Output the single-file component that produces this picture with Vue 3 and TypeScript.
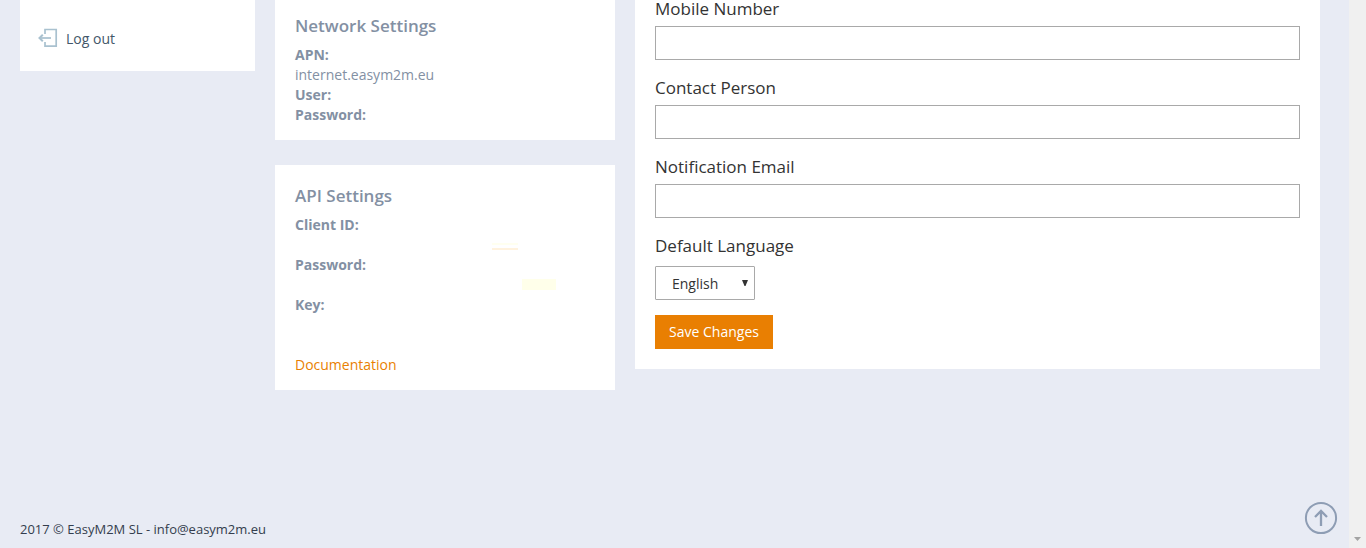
<script setup lang="ts">
import { ref } from 'vue'

interface Field {
  id: string
  label: string
}

const fields: Field[] = [
  { id: 'mobile', label: 'Mobile Number' },
  { id: 'contact', label: 'Contact Person' },
  { id: 'email', label: 'Notification Email' },
]
const values = ref<Record<string, string>>({ mobile: '', contact: '', email: '' })
</script>

<template>
  <div class="window">
    <div class="page">
      <div class="columns">
        <nav class="card sidebar">
          <a class="logout">
            <svg class="logout-icon" width="20" height="20" viewBox="0 0 20 20" fill="none">
              <path d="M7 6V1.5H18.2V18.2H7V14" stroke="#a9c1cf" stroke-width="1.7" />
              <path d="M13 10H2" stroke="#a9c1cf" stroke-width="1.7" />
              <path d="M4.8 6.8L1.5 10L4.8 13.2" stroke="#a9c1cf" stroke-width="2" />
            </svg>
            <span>Log out</span>
          </a>
        </nav>

        <div class="settings">
          <section class="card network">
            <h2>Network Settings</h2>
            <p><b>APN:</b></p>
            <p>internet.easym2m.eu</p>
            <p><b>User:</b></p>
            <p><b>Password:</b></p>
          </section>
          <section class="card api">
            <h2>API Settings</h2>
            <p class="double"><b>Client ID:</b></p>
            <p class="double"><b>Password:</b></p>
            <p class="triple"><b>Key:</b></p>
            <p><a class="link">Documentation</a></p>
            <i class="mark mark-line"></i>
            <i class="mark mark-block"></i>
          </section>
        </div>

        <form class="card profile" @submit.prevent>
          <div v-for="field in fields" :key="field.id" class="field">
            <label :for="field.id">{{ field.label }}</label>
            <input :id="field.id" v-model="values[field.id]" type="text" />
          </div>
          <label class="language-label">Default Language</label>
          <div class="select">
            <span>English</span>
            <svg width="6" height="6" viewBox="0 0 6 6"><path d="M0 0H6L3.5 6H2.5Z" fill="#333" /></svg>
          </div>
          <button type="submit">Save Changes</button>
        </form>
      </div>

      <footer>
        <span>2017 © EasyM2M SL - info@easym2m.eu</span>
        <svg class="to-top" width="34" height="34" viewBox="0 0 34 34" fill="none" stroke="#8e9db4">
          <circle cx="17" cy="17" r="15.1" stroke-width="2" />
          <path d="M17 25V10.5M11 16L17 10L23 16" stroke-width="2.3" />
        </svg>
      </footer>
    </div>
    <div class="scrollbar">
      <svg width="7" height="4" viewBox="0 0 7 4"><path d="M0 0H7L3.5 4Z" fill="#a3a3a3" /></svg>
    </div>
  </div>
</template>

<style>
body {
  margin: 0;
  overflow: hidden;
}
</style>

<style scoped>
.window {
  display: flex;
  height: 548px;
  box-sizing: border-box;
  overflow: hidden;
  font: 14px/20px "Open Sans", sans-serif;
  color: #8390a3;
}
.page {
  flex: 1;
  display: flex;
  flex-direction: column;
  justify-content: space-between;
  background: #e8ebf4;
}
.columns {
  display: flex;
  align-items: flex-start;
  gap: 20px;
  padding-left: 20px;
}
.card {
  box-sizing: border-box;
  background: #fff;
}
.sidebar {
  width: 235px;
  height: 71px;
  padding: 28px 18px 0;
}
.logout {
  display: flex;
  align-items: flex-start;
  gap: 8px;
  color: #43576a;
}
.logout span {
  padding-top: 1px;
}
.settings {
  display: flex;
  flex-direction: column;
  gap: 25px;
  width: 340px;
}
.network {
  height: 140px;
  padding: 16px 20px 0;
}
.api {
  position: relative;
  height: 225px;
  padding: 21px 20px 0;
}
h2 {
  margin: 0 0 9px;
  font-size: 17px;
  line-height: 20px;
  font-weight: 600;
}
p {
  margin: 0;
}
b {
  font-weight: 700;
}
.double {
  height: 40px;
}
.triple {
  height: 60px;
}
.link {
  color: #e97f02;
}
.mark {
  position: absolute;
}
.mark-line {
  left: 217px;
  top: 78px;
  width: 26px;
  height: 3px;
  border-top: 2px solid #fffff0;
  border-bottom: 2px solid #fff2de;
}
.mark-block {
  left: 247px;
  top: 114px;
  width: 34px;
  height: 11px;
  background: #ffffea;
}
.profile {
  width: 685px;
  height: 369px;
  padding: 0 20px;
}
.field {
  height: 79px;
}
label {
  display: block;
  height: 18px;
  padding-bottom: 8px;
  font-size: 17px;
  line-height: 18px;
  color: #333;
}
.language-label {
  padding-bottom: 11px;
}
input {
  display: block;
  box-sizing: border-box;
  width: 100%;
  height: 34px;
  padding: 6px 12px;
  border: 1px solid #a9a9a9;
  background: #fff;
  outline: 0;
}
.select {
  display: flex;
  align-items: center;
  justify-content: space-between;
  box-sizing: border-box;
  width: 100px;
  height: 34px;
  padding: 1px 6px 0 16px;
  border: 1px solid #a9a9a9;
  border-radius: 1px;
  color: #333;
}
.select svg {
  margin-top: -2px;
}
button {
  display: block;
  width: 118px;
  height: 34px;
  margin-top: 15px;
  padding: 0;
  border: 0;
  background: #e97f02;
  color: #fff;
  font: 14px/34px "Open Sans", sans-serif;
}
footer {
  display: flex;
  align-items: flex-end;
  justify-content: space-between;
  padding: 0 11px 13px 20px;
  font-size: 13px;
  line-height: 20px;
  color: #333d4d;
}
footer span {
  margin-bottom: -4px;
}
.scrollbar {
  display: flex;
  align-items: flex-end;
  justify-content: center;
  width: 17px;
  padding-bottom: 7px;
  box-sizing: border-box;
  background: #f0f0f0;
}
</style>
